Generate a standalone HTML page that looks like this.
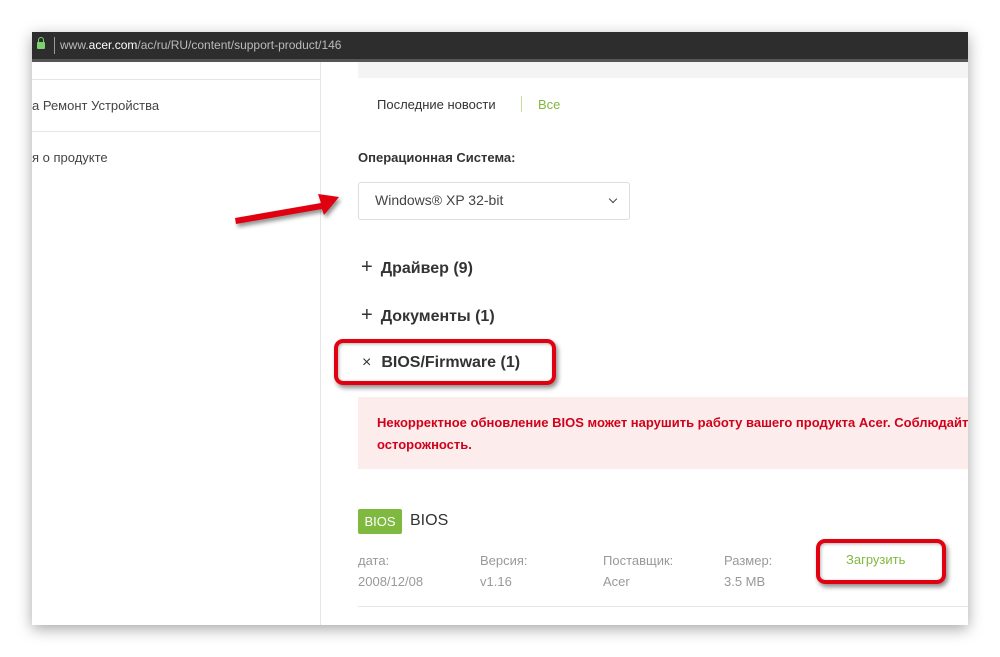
<!DOCTYPE html><html><head><style>
body{margin:0;width:1000px;height:657px;background:#fff;position:relative;overflow:hidden;font-family:"Liberation Sans",sans-serif}
.a{position:absolute}
.shot{left:32px;top:32px;width:936px;height:593px;background:#fff;box-shadow:0 4px 14px rgba(0,0,0,.35);overflow:hidden}
.t{position:absolute;white-space:nowrap}
.red{border:4px solid #e00010;border-radius:9px;box-shadow:2px 3px 5px rgba(0,0,0,.45),inset 1px 1px 3px rgba(0,0,0,.3)}
</style></head><body>
<div class="a shot">
 <div class="a" style="left:0;top:0;width:936px;height:27px;background:#2d2d2d"></div>
 <div class="a" style="left:0;top:27px;width:936px;height:3px;background:#555"></div>
 <div class="a" style="left:5px;top:10px;width:8px;height:7px;background:#7cd36b;border-radius:1px"></div>
 <div class="a" style="left:6px;top:5px;width:4px;height:6px;border:1px solid #7cd36b;border-bottom:0;border-radius:3px 3px 0 0"></div>
 <div class="a" style="left:22px;top:5px;width:1px;height:17px;background:#999"></div>
 <div class="t" style="left:28px;top:6px;font-size:12px;color:#bbb">www.<span style="color:#fff">acer.com</span>/ac/ru/RU/content/support-product/146</div>
 <div class="a" style="left:288px;top:30px;width:1px;height:563px;background:#e6e6e6"></div>
 <div class="a" style="left:0;top:47px;width:288px;height:1px;background:#e6e6e6"></div>
 <div class="a" style="left:0;top:99px;width:288px;height:1px;background:#e6e6e6"></div>
 <div class="t" style="left:0;top:66px;font-size:13px;color:#444">а Ремонт Устройства</div>
 <div class="t" style="left:0;top:118px;font-size:13px;color:#444">я о продукте</div>
 <div class="a" style="left:326px;top:30px;width:610px;height:16px;background:#f4f4f4"></div>
 <div class="t" style="left:345px;top:65px;font-size:13px;color:#333">Последние новости</div>
 <div class="a" style="left:489px;top:64px;width:1px;height:16px;background:#c6dca0"></div>
 <div class="t" style="left:506px;top:65px;font-size:13px;color:#80b940">Все</div>
 <div class="t" style="left:326px;top:118px;font-size:13px;color:#333;font-weight:bold">Операционная Система:</div>
 <div class="a" style="left:326px;top:150px;width:270px;height:36px;border:1px solid #ddd;border-radius:3px"></div>
 <div class="t" style="left:343px;top:160px;font-size:14px;color:#444">Windows® XP 32-bit</div>
 <div class="a" style="left:578px;top:164px;width:5px;height:5px;border-right:1.5px solid #444;border-bottom:1.5px solid #444;transform:rotate(45deg)"></div>
 <div class="t" style="left:329px;top:223px;font-size:16px;color:#333;font-weight:bold;line-height:24px"><span style="font-weight:normal;font-size:20px;margin-right:8px">+</span>Драйвер (9)</div>
 <div class="t" style="left:329px;top:271px;font-size:16px;color:#333;font-weight:bold;line-height:24px"><span style="font-weight:normal;font-size:20px;margin-right:8px">+</span>Документы (1)</div>
 <div class="a" style="left:326px;top:365px;width:610px;height:72px;background:#fcecec"></div>
 <div class="t" style="left:345px;top:383px;font-size:13px;color:#d0021b;font-weight:bold">Некорректное обновление BIOS может нарушить работу вашего продукта Acer. Соблюдайте</div>
 <div class="t" style="left:345px;top:405px;font-size:13px;color:#d0021b;font-weight:bold">осторожность.</div>
 <div class="a" style="left:326px;top:477px;width:44px;height:25px;background:#80b940;border-radius:2px;color:#fff;font-size:13px;text-align:center;line-height:25px">BIOS</div>
 <div class="t" style="left:378px;top:480px;font-size:16px;color:#333">BIOS</div>
 <div class="t" style="left:326px;top:521px;font-size:13px;color:#999">дата:</div>
 <div class="t" style="left:326px;top:542px;font-size:13px;color:#999">2008/12/08</div>
 <div class="t" style="left:448px;top:521px;font-size:13px;color:#999">Версия:</div>
 <div class="t" style="left:448px;top:542px;font-size:13px;color:#999">v1.16</div>
 <div class="t" style="left:571px;top:521px;font-size:13px;color:#999">Поставщик:</div>
 <div class="t" style="left:571px;top:542px;font-size:13px;color:#999">Acer</div>
 <div class="t" style="left:692px;top:521px;font-size:13px;color:#999">Размер:</div>
 <div class="t" style="left:692px;top:542px;font-size:13px;color:#999">3.5 MB</div>
 <div class="a" style="left:326px;top:574px;width:610px;height:1px;background:#e6e6e6"></div>
</div>
<div class="a red" style="left:334px;top:339px;width:214px;height:38px"></div>
<div class="t" style="left:362px;top:354px;font-size:16px;color:#333;font-weight:bold"><span style="font-weight:normal;margin-right:10px">×</span>BIOS/Firmware (1)</div>
<div class="a red" style="left:816px;top:539px;width:122px;height:37px"></div>
<div class="t" style="left:846px;top:552px;font-size:13px;color:#80b940">Загрузить</div>
<svg class="a" style="left:225px;top:185px" width="125" height="45"><g filter="drop-shadow(2px 3px 2px rgba(0,0,0,.45))"><path d="M10 33 L96 18 L93 9 L114 12 L99 30 L97 24 L11 39 Z" fill="#e00010"/></g></svg>
</body></html>
